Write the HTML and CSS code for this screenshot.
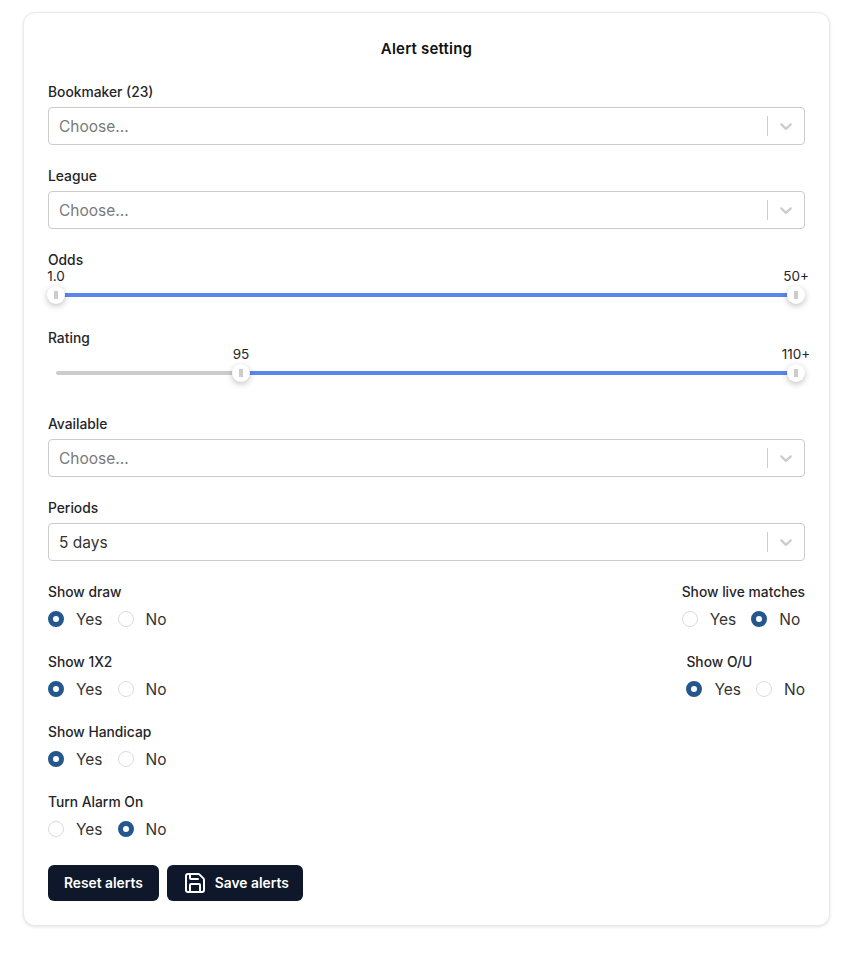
FILE: index.html
```html
<!DOCTYPE html>
<html lang="en">
<head>
    <meta charset="UTF-8">
    <meta name="viewport" content="width=device-width, initial-scale=1.0">
    <title>Alert setting</title>
    <link rel="stylesheet" href="styles.css">
</head>
<body>
    <form class="card" action="#">
        <h2 class="title">Alert setting</h2>

        <div class="field">
            <div class="label">Bookmaker (23)</div>
            <div class="select">
                <span class="placeholder">Choose...</span>
                <span class="separator"></span>
                <svg class="chevron" viewBox="0 0 20 20"><path d="M4.516 7.548c0.436-0.446 1.043-0.481 1.576 0l3.908 3.747 3.908-3.747c0.533-0.481 1.141-0.446 1.574 0 0.436 0.445 0.408 1.197 0 1.615-0.406 0.418-4.695 4.502-4.695 4.502-0.217 0.223-0.502 0.335-0.787 0.335s-0.57-0.112-0.789-0.335c0 0-4.287-4.084-4.695-4.502s-0.436-1.17 0-1.615z"/></svg>
            </div>
        </div>

        <div class="field">
            <div class="label">League</div>
            <div class="select">
                <span class="placeholder">Choose...</span>
                <span class="separator"></span>
                <svg class="chevron" viewBox="0 0 20 20"><path d="M4.516 7.548c0.436-0.446 1.043-0.481 1.576 0l3.908 3.747 3.908-3.747c0.533-0.481 1.141-0.446 1.574 0 0.436 0.445 0.408 1.197 0 1.615-0.406 0.418-4.695 4.502-4.695 4.502-0.217 0.223-0.502 0.335-0.787 0.335s-0.57-0.112-0.789-0.335c0 0-4.287-4.084-4.695-4.502s-0.436-1.17 0-1.615z"/></svg>
            </div>
        </div>

        <div class="sliderField">
            <div class="label">Odds</div>
            <div class="slider">
                <div class="track">
                    <div class="range" style="left: 0%; width: 100%"></div>
                    <div class="handle" style="left: 0%"><span class="handleValue">1.0</span></div>
                    <div class="handle" style="left: 100%"><span class="handleValue">50+</span></div>
                </div>
            </div>
        </div>

        <div class="sliderField sliderLast">
            <div class="label">Rating</div>
            <div class="slider">
                <div class="track">
                    <div class="range" style="left: 25%; width: 75%"></div>
                    <div class="handle" style="left: 25%"><span class="handleValue">95</span></div>
                    <div class="handle" style="left: 100%"><span class="handleValue">110+</span></div>
                </div>
            </div>
        </div>

        <div class="field">
            <div class="label">Available</div>
            <div class="select">
                <span class="placeholder">Choose...</span>
                <span class="separator"></span>
                <svg class="chevron" viewBox="0 0 20 20"><path d="M4.516 7.548c0.436-0.446 1.043-0.481 1.576 0l3.908 3.747 3.908-3.747c0.533-0.481 1.141-0.446 1.574 0 0.436 0.445 0.408 1.197 0 1.615-0.406 0.418-4.695 4.502-4.695 4.502-0.217 0.223-0.502 0.335-0.787 0.335s-0.57-0.112-0.789-0.335c0 0-4.287-4.084-4.695-4.502s-0.436-1.17 0-1.615z"/></svg>
            </div>
        </div>

        <div class="field">
            <div class="label">Periods</div>
            <div class="select">
                <span class="selectValue">5 days</span>
                <span class="separator"></span>
                <svg class="chevron" viewBox="0 0 20 20"><path d="M4.516 7.548c0.436-0.446 1.043-0.481 1.576 0l3.908 3.747 3.908-3.747c0.533-0.481 1.141-0.446 1.574 0 0.436 0.445 0.408 1.197 0 1.615-0.406 0.418-4.695 4.502-4.695 4.502-0.217 0.223-0.502 0.335-0.787 0.335s-0.57-0.112-0.789-0.335c0 0-4.287-4.084-4.695-4.502s-0.436-1.17 0-1.615z"/></svg>
            </div>
        </div>

        <div class="radioRow">
            <div class="radioGroup">
                <div class="label">Show draw</div>
                <div class="options">
                    <span class="radio checked"></span><span class="optionText">Yes</span>
                    <span class="radio"></span><span class="optionText">No</span>
                </div>
            </div>
            <div class="radioGroup">
                <div class="label">Show live matches</div>
                <div class="options">
                    <span class="radio"></span><span class="optionText">Yes</span>
                    <span class="radio checked"></span><span class="optionText">No</span>
                </div>
            </div>
        </div>

        <div class="radioRow">
            <div class="radioGroup">
                <div class="label">Show 1X2</div>
                <div class="options">
                    <span class="radio checked"></span><span class="optionText">Yes</span>
                    <span class="radio"></span><span class="optionText">No</span>
                </div>
            </div>
            <div class="radioGroup">
                <div class="label">Show O/U</div>
                <div class="options">
                    <span class="radio checked"></span><span class="optionText">Yes</span>
                    <span class="radio"></span><span class="optionText">No</span>
                </div>
            </div>
        </div>

        <div class="radioRow">
            <div class="radioGroup">
                <div class="label">Show Handicap</div>
                <div class="options">
                    <span class="radio checked"></span><span class="optionText">Yes</span>
                    <span class="radio"></span><span class="optionText">No</span>
                </div>
            </div>
        </div>

        <div class="radioRow">
            <div class="radioGroup">
                <div class="label">Turn Alarm On</div>
                <div class="options">
                    <span class="radio"></span><span class="optionText">Yes</span>
                    <span class="radio checked"></span><span class="optionText">No</span>
                </div>
            </div>
        </div>

        <div class="buttons">
            <button class="button" type="button">Reset alerts</button>
            <button class="button iconButton" type="button">
                <svg class="saveIcon" viewBox="0 0 24 24"><path d="M15.2 3a2 2 0 0 1 1.4.6l3.8 3.8a2 2 0 0 1 .6 1.4V19a2 2 0 0 1-2 2H5a2 2 0 0 1-2-2V5a2 2 0 0 1 2-2z"/><path d="M17 21v-7a1 1 0 0 0-1-1H8a1 1 0 0 0-1 1v7"/><path d="M7 3v4a1 1 0 0 0 1 1h7"/></svg>
                Save alerts
            </button>
        </div>
    </form>
</body>
</html>
```

FILE: styles.css
```css
* {
    box-sizing: border-box;
}

body {
    margin: 0;
    padding: 12px 38px 32px 23px;
    background: #fff;
    font-family: Inter, "Liberation Sans", sans-serif;
    color: #1f2529;
}

.card {
    height: 914px;
    padding: 24px 24px 0;
    background: #fff;
    border: 1px solid #e8e9ec;
    border-radius: 12px;
    box-shadow: 0 1px 3px rgba(15, 23, 42, 0.12);
}

.title {
    margin: 0 0 21px;
    height: 24px;
    line-height: 24px;
    font-size: 15px;
    font-weight: 600;
    letter-spacing: 0.2px;
    text-align: center;
    color: #111;
}

.label {
    height: 20px;
    line-height: 20px;
    font-size: 13.8px;
    font-weight: 500;
}

.field {
    margin-bottom: 21px;
}

.select {
    display: flex;
    align-items: center;
    height: 38px;
    margin-top: 5px;
    padding: 0 8px 0 10px;
    border: 1px solid #ccc;
    border-radius: 4px;
    font-size: 15.5px;
}

.placeholder {
    flex: 1;
    color: #7a7a7a;
}

.selectValue {
    flex: 1;
    color: #333;
}

.separator {
    width: 1px;
    height: 20px;
    background: #ccc;
    margin-right: 8px;
}

.chevron {
    width: 20px;
    height: 20px;
    fill: #ccc;
}

.sliderField {
    margin-bottom: 18px;
}

.sliderLast {
    margin-bottom: 26px;
}

.slider {
    height: 40px;
    padding: 23px 9px 0 8px;
}

.track {
    position: relative;
    height: 4px;
    border-radius: 2px;
    background: #ccc;
}

.range {
    position: absolute;
    top: 0;
    height: 4px;
    background: #5a87ec;
}

.handle {
    position: absolute;
    top: -7px;
    width: 18px;
    height: 18px;
    margin-left: -9px;
    border-radius: 50%;
    background: #fff;
    box-shadow: 0 2px 6px rgba(0, 0, 0, 0.25);
}

.handle::after {
    content: "";
    position: absolute;
    left: 7px;
    top: 5px;
    width: 4px;
    height: 8px;
    background: #ccc;
}

.handleValue {
    position: absolute;
    bottom: 20px;
    left: 50%;
    transform: translateX(-50%);
    font-size: 13.5px;
    line-height: 16px;
    white-space: nowrap;
}

.radioRow {
    display: flex;
    justify-content: space-between;
    height: 70px;
}

.options {
    display: flex;
    align-items: center;
    height: 24px;
    margin-top: 5px;
    font-size: 15.5px;
    color: #333;
}

.radio {
    width: 16px;
    height: 16px;
    margin-right: 12px;
    border: 1px solid #d9dcdf;
    border-radius: 50%;
    background: #fff;
}

.radio.checked {
    border: 5px solid #23578e;
}

.optionText {
    margin-right: 15px;
}

.optionText:last-child {
    margin-right: 0;
}

.buttons {
    display: flex;
    gap: 8px;
    margin-top: 3px;
}

.button {
    display: flex;
    align-items: center;
    gap: 8px;
    height: 36px;
    padding: 0 16px;
    border: 0;
    border-radius: 6px;
    background: #0f172a;
    color: #fff;
    font-family: inherit;
    font-size: 13.8px;
    font-weight: 600;
}

.iconButton {
    padding-right: 14px;
}

.saveIcon {
    width: 24px;
    height: 24px;
    fill: none;
    stroke: #fff;
    stroke-width: 2;
    stroke-linecap: round;
    stroke-linejoin: round;
}
```
